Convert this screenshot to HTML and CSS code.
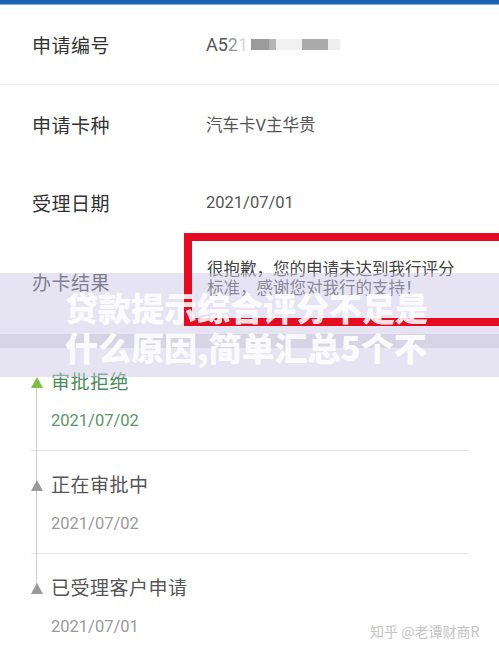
FILE: index.html
```html
<html lang="zh-CN">
<head>
    <meta charset="UTF-8">
    <title>申请进度</title>
    <link rel="stylesheet" href="styles.css">
</head>
<body>
    <div class="topbar"></div>
    <main class="page">
        <section class="info">
            <div class="info-row">
                <div class="info-label">申请编号</div>
                <div class="info-value app-no">
                    <span class="dark">A5</span><span class="mid">2</span><span class="faint">1</span>
                    <span class="blur b1"></span><span class="blur b2"></span><span class="blur b3"></span><span class="blur b4"></span><span class="blur b5"></span>
                </div>
            </div>
            <div class="divider"></div>
            <div class="info-row">
                <div class="info-label">申请卡种</div>
                <div class="info-value">汽车卡V主华贵</div>
            </div>
            <div class="info-row">
                <div class="info-label">受理日期</div>
                <div class="info-value">2021/07/01</div>
            </div>
            <div class="info-row result-row">
                <div class="info-label">办卡结果</div>
                <div class="info-value result">很抱歉，您的申请未达到我行评分<br>标准，感谢您对我行的支持！</div>
            </div>
        </section>

        <section class="timeline">
            <div class="step active">
                <span class="mark"></span>
                <div class="step-body">
                    <div class="step-title">审批拒绝</div>
                    <div class="step-date">2021/07/02</div>
                </div>
            </div>
            <div class="step">
                <span class="mark"></span>
                <div class="step-body">
                    <div class="step-title">正在审批中</div>
                    <div class="step-date">2021/07/02</div>
                </div>
            </div>
            <div class="step last">
                <span class="mark"></span>
                <div class="step-body">
                    <div class="step-title">已受理客户申请</div>
                    <div class="step-date">2021/07/01</div>
                </div>
            </div>
        </section>
    </main>

    <!-- annotation + article title overlay -->
    <div class="band"><div class="band-stripe"></div></div>
    <div class="highlight"></div>
    <div class="headline">贷款提示综合评分不足是<br>什么原因,简单汇总5个不</div>
    <div class="credit">知乎 @老谭财商R</div>
</body>
</html>
```

FILE: styles.css
```css
body {
    margin: 0;
    width: 499px;
    height: 651px;
    overflow: hidden;
    position: relative;
    background: #fff;
    font-family: Roboto, "Noto Sans CJK SC", sans-serif;
    color: #333;
}
.topbar {
    height: 5px;
    background-color: #1764b3;
    border-bottom: 1px solid #7fb0dc;
    box-sizing: border-box;
}
.info-row {
    display: flex;
    align-items: center;
    height: 78px;
    padding-left: 32px;
}
.info-row:first-child {
    height: 79px;
}
.info-row.result-row {
    height: 80px;
}
.info-label {
    width: 174px;
    font-size: 19px;
    color: #333;
    letter-spacing: 0.5px;
}
.info-value {
    font-size: 16.5px;
    color: #555;
}
.divider {
    height: 1px;
    background-color: #eeeeee;
}
.app-no {
    display: flex;
    align-items: center;
    font-size: 18px;
}
.app-no .dark { color: #555; }
.app-no .mid { color: #9a9a9a; }
.app-no .faint { color: #d6d6d6; }
.blur {
    display: inline-block;
    height: 11px;
}
.b1 { width: 18px; background: #9b9b9b; margin-left: 3px; }
.b2 { width: 7px; background: #b4b4b4; }
.b3 { width: 26px; background: #f1f1f1; }
.b4 { width: 26px; background: #aaaaaa; }
.b5 { width: 12px; background: #eeeeee; }
.result {
    font-size: 16.5px;
    line-height: 19px;
    color: #444;
    margin-left: 1px;
    margin-top: -4px;
}

/* timeline */
.timeline {
    position: relative;
    margin: 0 30px 0 31px;
    padding-top: 27px;
}
.timeline::before {
    content: "";
    position: absolute;
    left: 5px;
    top: 62px;
    height: 207px;
    width: 1px;
    background-color: #cfcfcf;
}
.step {
    display: flex;
    padding: 22px 0 17px;
    border-bottom: 1px solid #e4e4e4;
}
.step.last {
    border-bottom: none;
}
.mark {
    position: relative;
    z-index: 1;
    width: 0;
    height: 0;
    margin-top: 7px;
    margin-right: 8px;
    border-left: 6px solid transparent;
    border-right: 6px solid transparent;
    border-bottom: 11px solid #9a9a9a;
}
.step.active .mark {
    border-bottom-color: #7cc142;
}
.step-title {
    font-size: 19px;
    line-height: 26px;
    color: #555;
    letter-spacing: 0.5px;
}
.step-date {
    margin-top: 13px;
    font-size: 16.5px;
    line-height: 24px;
    color: #9a9a9a;
}
.step.active .step-title {
    color: #4b8b5a;
}
.step.active .step-date {
    color: #5a9467;
}

/* overlays */
.band {
    position: absolute;
    left: 0;
    top: 273px;
    width: 499px;
    height: 104px;
    background: rgba(205, 201, 231, 0.5);
    z-index: 1;
}
.band-stripe {
    position: absolute;
    left: 0;
    right: 0;
    top: 61px;
    height: 14px;
    background: rgba(90, 85, 110, 0.1);
}
.highlight {
    position: absolute;
    left: 184px;
    top: 233px;
    width: 315px;
    height: 93px;
    box-sizing: border-box;
    border: 8px solid #e50c22;
    border-right: none;
    z-index: 2;
}
.headline {
    position: absolute;
    left: 65px;
    top: 287px;
    z-index: 3;
    font-family: "Noto Sans CJK SC", sans-serif;
    font-weight: 900;
    font-size: 33px;
    line-height: 40px;
    color: rgba(255, 255, 255, 0.9);
    white-space: nowrap;
}
.credit {
    position: absolute;
    left: 370px;
    top: 621px;
    font-family: "Noto Sans CJK SC", sans-serif;
    font-size: 14px;
    line-height: 20px;
    color: #c4c4c4;
    text-shadow: 0 0 1px #fff, 1px 1px 0 #fff;
}
```
